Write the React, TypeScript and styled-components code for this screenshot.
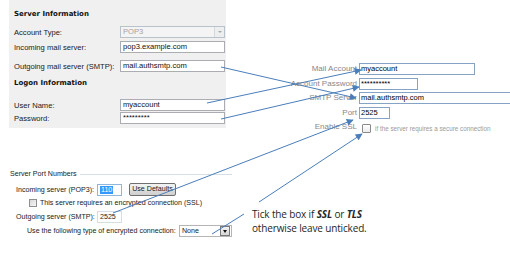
import React from 'react'
import styled, { createGlobalStyle } from 'styled-components'

const GlobalStyle = createGlobalStyle`
  html, body {
    margin: 0;
    padding: 0;
    background: #fff;
  }
  body {
    font-family: 'Liberation Sans', Arial, sans-serif;
  }
`

const Page = styled.div`
  position: relative;
  width: 510px;
  height: 256px;
  overflow: hidden;
  background: #fff;
`

const TopRow = styled.div`
  display: flex;
  align-items: flex-start;
  height: 168px;
`

// Outlook "Server Information" panel
const OutlookPanel = styled.div`
  flex-shrink: 0;
  margin-left: 9px;
  width: 211px;
  height: 128px;
  padding: 0 1px 0 5px;
  background: #f0f0f0;
  display: flex;
  flex-direction: column;
  font-size: 7.6px;
  color: #1a1a1a;
`

const SectionTitle = styled.div<{ $mt: number }>`
  margin-top: ${p => p.$mt}px;
  height: 14px;
  line-height: 14px;
  font-family: 'DejaVu Sans', Verdana, sans-serif;
  font-size: 7px;
  font-weight: bold;
  color: #111;
`

const FieldRow = styled.div<{ $mt: number }>`
  display: flex;
  align-items: center;
  height: 12px;
  margin-top: ${p => p.$mt}px;
`

const FieldLabel = styled.div`
  width: 106px;
  white-space: nowrap;
`

const TextBox = styled.div`
  box-sizing: border-box;
  width: 105px;
  height: 12px;
  padding-left: 2px;
  border: 1px solid #abadb3;
  background: #fff;
  line-height: 10px;
  color: #111;
`

const Combo = styled.div`
  box-sizing: border-box;
  display: flex;
  width: 105px;
  height: 12px;
  border: 1px solid #b8c2cc;
  background: #f4f4f4;
  color: #a2a2a2;
  line-height: 10px;
`

const ComboText = styled.span`
  flex: 1;
  padding-left: 2px;
`

const ComboArrow = styled.span`
  width: 9px;
  border-left: 1px solid #d4d9de;
  background: #eceeef;
  display: flex;
  align-items: center;
  justify-content: center;
  &::after {
    content: '';
    border-left: 2px solid transparent;
    border-right: 2px solid transparent;
    border-top: 2px solid #a8a8a8;
  }
`

// Mail app form on the right
const MailForm = styled.div`
  flex-shrink: 0;
  margin-left: 61px;
  margin-top: 63px;
  display: grid;
  grid-template-columns: 70px 152px;
  grid-auto-rows: 12px;
  column-gap: 2px;
  row-gap: 2.5px;
`

const MailLabel = styled.div<{ $pt?: number }>`
  text-align: right;
  font-size: 8px;
  line-height: 12px;
  padding-top: ${p => p.$pt || 0}px;
  color: #888;
  white-space: nowrap;
`

const MailInput = styled.div<{ $w: number }>`
  box-sizing: border-box;
  width: ${p => p.$w}px;
  height: 12px;
  padding-left: 1px;
  border: 1px solid #86a3c6;
  background: #fff;
  font-size: 7.5px;
  line-height: 10px;
  color: #000;
  white-space: nowrap;
`

const SslCell = styled.div`
  display: flex;
  align-items: center;
  padding: 3px 0 0 3px;
`

const MacCheck = styled.span`
  box-sizing: border-box;
  width: 9px;
  height: 9px;
  border: 1px solid #8a8a8a;
  border-radius: 1px;
  background: linear-gradient(#fff, #ececec);
`

const SslHint = styled.span`
  margin-left: 4px;
  font-size: 6.3px;
  color: #9a9a9a;
  white-space: nowrap;
`

const BottomRow = styled.div`
  display: flex;
  align-items: flex-start;
`

// Outlook "Server Port Numbers" panel
const PortPanel = styled.div`
  flex-shrink: 0;
  margin-left: 10px;
  width: 222px;
  display: flex;
  flex-direction: column;
  font-size: 7.1px;
  color: #1a1a1a;
`

const GroupHeader = styled.div`
  display: flex;
  align-items: center;
  height: 12px;
  &::after {
    content: '';
    flex: 1;
    height: 1px;
    margin-left: 3px;
    background: #d5dfe5;
  }
`

const PortRow = styled.div<{ $mt: number; $pl: number; $h?: number }>`
  display: flex;
  align-items: center;
  height: ${p => p.$h || 12}px;
  margin-top: ${p => p.$mt}px;
  padding-left: ${p => p.$pl}px;
  white-space: nowrap;
`

const PortLabel = styled.span<{ $w: number }>`
  width: ${p => p.$w}px;
`

const PortBox = styled.div<{ $focused?: boolean }>`
  box-sizing: border-box;
  width: 25px;
  height: 12px;
  padding-left: 2px;
  border: 1px solid ${p => (p.$focused ? '#8fb7de' : '#d6dde4')};
  background: #fff;
  line-height: 10px;
`

const Selected = styled.span`
  background: #3399ff;
  color: #fff;
  padding: 0 1px;
`

const WinButton = styled.div`
  box-sizing: border-box;
  width: 47px;
  height: 13px;
  margin-left: 7px;
  border: 1px solid #707070;
  border-radius: 2px;
  background: linear-gradient(#f2f2f2, #ebebeb 50%, #dddddd 51%, #cfcfcf);
  text-align: center;
  line-height: 11px;
`

const WinCheck = styled.span`
  box-sizing: border-box;
  width: 8px;
  height: 8px;
  margin-right: 3px;
  border: 1px solid #8e8f8f;
  background: linear-gradient(135deg, #d8d8d8, #f7f7f7);
`

const Dropdown = styled.div`
  box-sizing: border-box;
  display: flex;
  width: 53px;
  height: 12px;
  border: 1px solid #b5b5b5;
  background: #fff;
  line-height: 10px;
`

const DropText = styled.span`
  flex: 1;
  padding-left: 2px;
`

const DropButton = styled.span`
  box-sizing: border-box;
  width: 10px;
  margin: 0 1px 0 0;
  border: 1px solid #7a7a7a;
  background: linear-gradient(#f3f3f3, #d6d6d6);
  display: flex;
  align-items: center;
  justify-content: center;
  &::after {
    content: '';
    border-left: 2px solid transparent;
    border-right: 2px solid transparent;
    border-top: 3px solid #111;
  }
`

const Note = styled.div`
  margin-left: 20px;
  margin-top: 39px;
  font-size: 10px;
  line-height: 14px;
  color: #262626;
  font-family: 'Open Sans', 'Liberation Sans', sans-serif;
  letter-spacing: -0.15px;
  b {
    font-style: italic;
  }
`

const Arrows = styled.svg`
  position: absolute;
  left: 0;
  top: 0;
  pointer-events: none;
`

const lines: [number, number, number, number, boolean][] = [
  [221, 67, 356, 98, true],
  [207, 103, 361, 70, true],
  [221, 119, 359, 87, true],
  [113, 213, 353, 120, true],
  [259, 202, 362, 134, true],
  [244, 214, 212, 234, false],
]

export default function App() {
  return (
    <Page>
      <GlobalStyle />
      <TopRow>
        <OutlookPanel>
          <SectionTitle $mt={7}>Server Information</SectionTitle>
          <FieldRow $mt={5}>
            <FieldLabel>Account Type:</FieldLabel>
            <Combo>
              <ComboText>POP3</ComboText>
              <ComboArrow />
            </Combo>
          </FieldRow>
          <FieldRow $mt={3}>
            <FieldLabel>Incoming mail server:</FieldLabel>
            <TextBox>pop3.example.com</TextBox>
          </FieldRow>
          <FieldRow $mt={7}>
            <FieldLabel>Outgoing mail server (SMTP):</FieldLabel>
            <TextBox>mail.authsmtp.com</TextBox>
          </FieldRow>
          <SectionTitle $mt={4}>Logon Information</SectionTitle>
          <FieldRow $mt={9}>
            <FieldLabel>User Name:</FieldLabel>
            <TextBox>myaccount</TextBox>
          </FieldRow>
          <FieldRow $mt={1}>
            <FieldLabel>Password:</FieldLabel>
            <TextBox>*********</TextBox>
          </FieldRow>
        </OutlookPanel>

        <MailForm>
          <MailLabel>Mail Account</MailLabel>
          <MailInput $w={116}>myaccount</MailInput>
          <MailLabel>Account Password</MailLabel>
          <MailInput $w={59}>**********</MailInput>
          <MailLabel>SMTP Server</MailLabel>
          <MailInput $w={160}>mail.authsmtp.com</MailInput>
          <MailLabel>Port</MailLabel>
          <MailInput $w={31}>2525</MailInput>
          <MailLabel>Enable SSL</MailLabel>
          <SslCell>
            <MacCheck />
            <SslHint>if the server requires a secure connection</SslHint>
          </SslCell>
        </MailForm>
      </TopRow>

      <BottomRow>
        <PortPanel>
          <GroupHeader>Server Port Numbers</GroupHeader>
          <PortRow $mt={3} $pl={6} $h={13}>
            <PortLabel $w={81}>Incoming server (POP3):</PortLabel>
            <PortBox $focused>
              <Selected>110</Selected>
            </PortBox>
            <WinButton>Use Defaults</WinButton>
          </PortRow>
          <PortRow $mt={2} $pl={19} $h={9}>
            <WinCheck />
            This server requires an encrypted connection (SSL)
          </PortRow>
          <PortRow $mt={4} $pl={6}>
            <PortLabel $w={81}>Outgoing server (SMTP):</PortLabel>
            <PortBox>2525</PortBox>
          </PortRow>
          <PortRow $mt={2} $pl={17}>
            <PortLabel $w={152}>
              Use the following type of encrypted connection:
            </PortLabel>
            <Dropdown>
              <DropText>None</DropText>
              <DropButton />
            </Dropdown>
          </PortRow>
        </PortPanel>
        <Note>
          Tick the box if <b>SSL</b> or <b>TLS</b>
          <br />
          otherwise leave unticked.
        </Note>
      </BottomRow>

      <Arrows width={510} height={256} viewBox="0 0 510 256">
        <defs>
          <marker
            id="head"
            viewBox="0 0 10 10"
            refX="9"
            refY="5"
            markerWidth="8"
            markerHeight="7"
            markerUnits="userSpaceOnUse"
            orient="auto"
          >
            <path d="M0 0 L10 5 L0 10 Z" fill="#4a7ebb" />
          </marker>
        </defs>
        {lines.map(([x1, y1, x2, y2, head], i) => (
          <line
            key={i}
            x1={x1}
            y1={y1}
            x2={x2}
            y2={y2}
            stroke="#4a7ebb"
            strokeWidth={1}
            markerEnd={head ? 'url(#head)' : undefined}
          />
        ))}
      </Arrows>
    </Page>
  )
}
